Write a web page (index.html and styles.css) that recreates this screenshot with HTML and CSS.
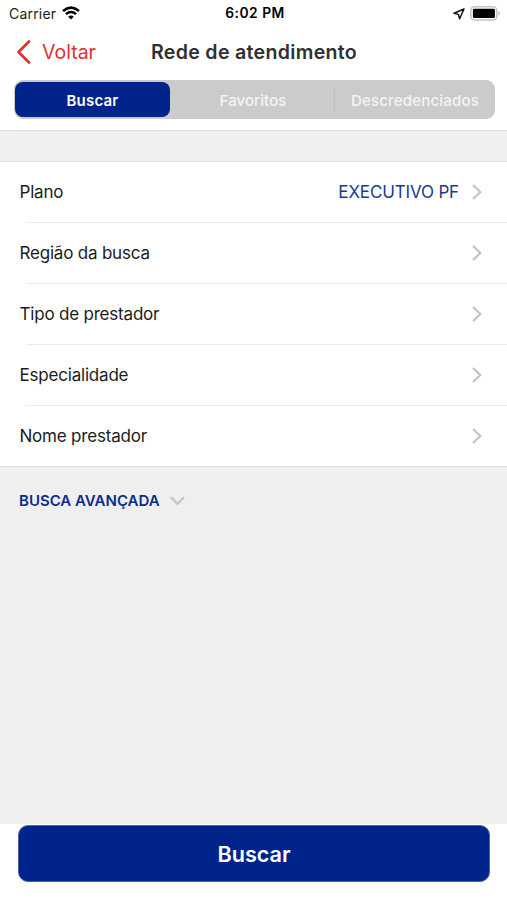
FILE: index.html
```html
<!DOCTYPE html>
<html lang="pt-BR">
<head>
    <meta charset="UTF-8">
    <meta name="viewport" content="width=device-width, initial-scale=1.0">
    <title>Rede de atendimento</title>
    <link rel="stylesheet" href="styles.css">
</head>
<body>
    <header class="header">
        <div class="status-bar">
            <div class="status-left">
                <span class="carrier">Carrier</span>
                <svg class="wifi" width="18" height="14" viewBox="0 0 18 14">
                    <path d="M1 4.9 Q9 -1.8 17 4.9" fill="none" stroke="#000" stroke-width="2.6"/>
                    <path d="M3.9 8.2 Q9 3.9 14.1 8.2" fill="none" stroke="#000" stroke-width="2.4"/>
                    <path d="M6.2 10.7 Q9 8.4 11.8 10.7 L9 13.6 Z" fill="#000"/>
                </svg>
            </div>
            <span class="time">6:02 PM</span>
            <div class="status-right">
                <svg class="location" width="12" height="12" viewBox="0 0 12 12">
                    <path d="M11 1 L1 5.2 L5.4 6.4 L6.6 10.7 Z" fill="none" stroke="#111" stroke-width="1.5" stroke-linejoin="round"/>
                </svg>
                <svg width="31" height="15" viewBox="0 0 31 15">
                    <rect x="0.8" y="0.8" width="26" height="13.2" rx="3.8" fill="#fff" stroke="#c4c4c4" stroke-width="1.6"/>
                    <rect x="2.9" y="2.8" width="22" height="9.2" rx="1.2" fill="#000"/>
                    <path d="M28.2 5 Q30 6 30 7.4 Q30 8.8 28.2 9.8 Z" fill="#c4c4c4"/>
                </svg>
            </div>
        </div>

        <nav class="navbar">
            <a class="back" href="#">
                <svg width="15" height="24" viewBox="0 0 15 24">
                    <path d="M13 1.5 L2.5 12 L13 22.5" fill="none" stroke="#df302d" stroke-width="2.6" stroke-linecap="round" stroke-linejoin="round"/>
                </svg>
                <span>Voltar</span>
            </a>
            <h1 class="title">Rede de atendimento</h1>
        </nav>

        <div class="segments">
            <button class="segment active">Buscar</button>
            <button class="segment">Favoritos</button>
            <button class="segment divided">Descredenciados</button>
        </div>
    </header>

    <main class="content">
        <ul class="list">
            <li class="row">
                <span class="label">Plano</span>
                <span class="value">EXECUTIVO PF</span>
                <svg class="chevron" width="10" height="16" viewBox="0 0 10 16"><path d="M1 1 L8.3 8 L1 15"/></svg>
            </li>
            <li class="row">
                <span class="label">Região da busca</span>
                <svg class="chevron" width="10" height="16" viewBox="0 0 10 16"><path d="M1 1 L8.3 8 L1 15"/></svg>
            </li>
            <li class="row">
                <span class="label">Tipo de prestador</span>
                <svg class="chevron" width="10" height="16" viewBox="0 0 10 16"><path d="M1 1 L8.3 8 L1 15"/></svg>
            </li>
            <li class="row">
                <span class="label">Especialidade</span>
                <svg class="chevron" width="10" height="16" viewBox="0 0 10 16"><path d="M1 1 L8.3 8 L1 15"/></svg>
            </li>
            <li class="row">
                <span class="label">Nome prestador</span>
                <svg class="chevron" width="10" height="16" viewBox="0 0 10 16"><path d="M1 1 L8.3 8 L1 15"/></svg>
            </li>
        </ul>
        <a class="advanced" href="#">
            <span>BUSCA AVANÇADA</span>
            <svg class="chevron" width="15" height="10" viewBox="0 0 15 10"><path d="M1 1.3 L7.5 7.9 L14 1.3"/></svg>
        </a>
    </main>

    <footer class="footer">
        <button class="submit">Buscar</button>
    </footer>
</body>
</html>
```
FILE: styles.css
```css
* {
    box-sizing: border-box;
}
body {
    margin: 0;
    height: 900px;
    display: flex;
    flex-direction: column;
    overflow: hidden;
    background-color: #ffffff;
    color: #1c1c1c;
    font-family: Inter, "Liberation Sans", sans-serif;
    white-space: nowrap;
}
a {
    text-decoration: none;
}
button {
    border: none;
    padding: 0;
    font-family: inherit;
}
.header {
    height: 131px;
    border-bottom: 1px solid #dedede;
}
.status-bar {
    height: 28px;
    padding: 0 6px 0 9px;
    display: grid;
    grid-template-columns: 1fr auto 1fr;
    align-items: center;
}
.status-left {
    display: flex;
    align-items: center;
    gap: 6px;
}
.carrier {
    margin-top: -2px;
    font-size: 14px;
    letter-spacing: 0.2px;
}
.wifi {
    margin-top: -2px;
}
.time {
    margin-top: -2px;
    font-size: 13.8px;
    font-weight: 600;
    letter-spacing: 0.5px;
    color: #000000;
}
.status-right {
    display: flex;
    align-items: center;
    justify-content: flex-end;
    gap: 5px;
    margin-top: -2px;
}
.location {
    margin-top: 2px;
}
.navbar {
    height: 48px;
    padding-left: 16px;
    display: flex;
    align-items: center;
}
.back {
    display: flex;
    align-items: center;
    gap: 11px;
    width: 135px;
    color: #df302d;
    font-size: 19.5px;
}
.title {
    margin: 0;
    font-size: 19.6px;
    font-weight: 600;
    letter-spacing: 0.3px;
    color: #303030;
}
.segments {
    height: 39px;
    margin: 4px 12px 0 14px;
    padding: 2px 0 2px 1px;
    display: grid;
    grid-template-columns: 155px 1fr 161px;
    background-color: #cbcbcb;
    border-radius: 9px;
}
.segment {
    background: none;
    color: #f4f4f4;
    font-size: 15px;
    font-weight: 500;
    letter-spacing: 0.2px;
    padding-top: 1px;
}
.segment.active {
    background-color: #00238c;
    border-radius: 8px;
    color: #ffffff;
    font-weight: 600;
}
.segment:nth-child(2) {
    padding-left: 2px;
    letter-spacing: 0.1px;
}
.segment.divided {
    margin: 5px 0;
    border-left: 1px solid #bfbfbf;
}
.content {
    flex: 1;
    padding-top: 30px;
    background-color: #efefef;
}
.list {
    margin: 0;
    padding: 0;
    list-style: none;
    background-color: #ffffff;
    border-top: 1px solid #e4e4e4;
    border-bottom: 1px solid #dedede;
}
.row {
    height: 61px;
    padding: 0 25px 2px 19.5px;
    display: flex;
    align-items: center;
    background: linear-gradient(#ebebeb, #ebebeb) 26px 100% / 100% 1px no-repeat;
}
.row:last-child {
    height: 60px;
    padding-bottom: 0;
    background: none;
}
.label {
    flex: 1;
    font-size: 17px;
    letter-spacing: -0.2px;
}
.value {
    margin-right: 13px;
    font-size: 17px;
    letter-spacing: -0.15px;
    color: #1c3990;
}
.chevron {
    fill: none;
    stroke: #c4c4c4;
    stroke-width: 2.3;
}
.advanced {
    display: inline-flex;
    align-items: center;
    gap: 10px;
    height: 67px;
    padding-left: 19px;
    color: #0b2c8f;
    font-size: 15px;
    font-weight: 600;
}
.footer {
    height: 76px;
    padding: 1px 17px 0 18px;
}
.submit {
    width: 100%;
    height: 57px;
    background-color: #00238c;
    border: 1px solid #4a62b0;
    border-radius: 10px;
    color: #ffffff;
    font-size: 21.6px;
    font-weight: 600;
}
```
